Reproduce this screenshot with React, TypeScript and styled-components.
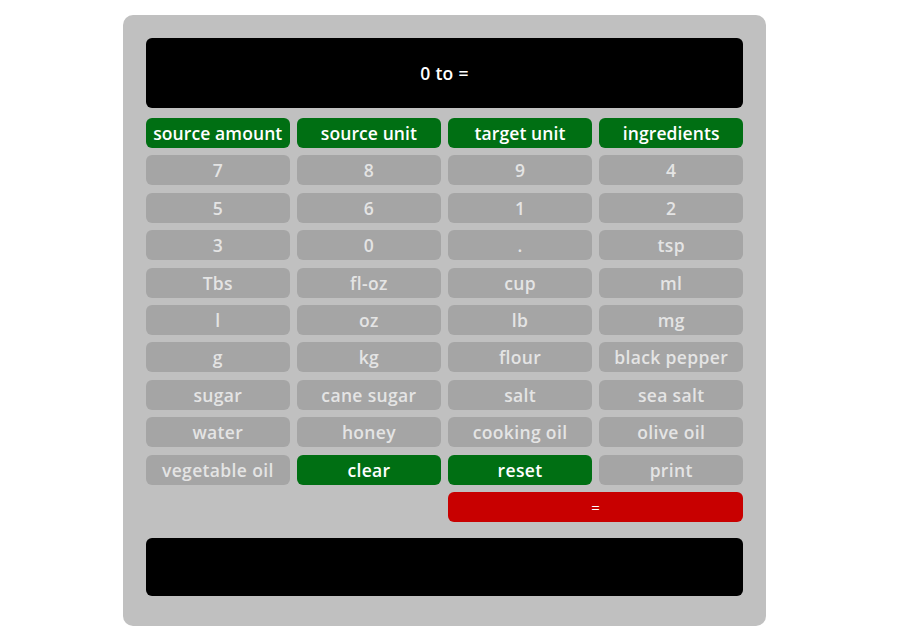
import React, { useState } from 'react';
import styled, { createGlobalStyle } from 'styled-components';

type Kind = 'field' | 'key' | 'action' | 'equals';

interface Key {
  label: string;
  kind: Kind;
  wide?: boolean;
}

const fields = ['source amount', 'source unit', 'target unit', 'ingredients'];
const digits = ['7', '8', '9', '4', '5', '6', '1', '2', '3', '0', '.'];
const units = ['tsp', 'Tbs', 'fl-oz', 'cup', 'ml', 'l', 'oz', 'lb', 'mg', 'g', 'kg'];
const ingredients = [
  'flour', 'black pepper', 'sugar', 'cane sugar', 'salt', 'sea salt',
  'water', 'honey', 'cooking oil', 'olive oil', 'vegetable oil',
];

const keys: Key[] = [
  ...fields.map(label => ({ label, kind: 'field' as Kind })),
  ...[...digits, ...units, ...ingredients].map(label => ({ label, kind: 'key' as Kind })),
  { label: 'clear', kind: 'action' },
  { label: 'reset', kind: 'action' },
  { label: 'print', kind: 'key' },
];

const App: React.FC = () => {
  const [display] = useState('0 to =');

  return (
    <>
      <GlobalStyle />
      <Page>
        <Calculator>
          <Display>{display}</Display>
          <KeyGrid>
            {keys.map((k, idx) => (
              <KeyButton key={idx} kind={k.kind}>{k.label}</KeyButton>
            ))}
            <KeyButton kind="equals" wide>=</KeyButton>
          </KeyGrid>
          <Output />
        </Calculator>
      </Page>
    </>
  );
};

const GlobalStyle = createGlobalStyle`
  body {
    margin: 0;
    background: #ffffff;
    font-family: "Open Sans", "Noto Sans", sans-serif;
  }
`;

const Page = styled.div`
  padding: 15px 0 0 123px;
`;

const Calculator = styled.div`
  width: 643px;
  box-sizing: border-box;
  padding: 23px 23px 30px 23px;
  background: #c0c0c0;
  border-radius: 10px;
`;

const Display = styled.div`
  height: 70px;
  display: flex;
  align-items: center;
  justify-content: center;
  background: #000000;
  border-radius: 6px;
  color: #ffffff;
  font-size: 17.5px;
  font-weight: 600;
  letter-spacing: 0.3px;
  margin-bottom: 10px;
`;

const KeyGrid = styled.div`
  display: grid;
  grid-template-columns: repeat(4, 1fr);
  grid-auto-rows: 30px;
  gap: 7.4px 7.5px;
`;

const KeyButton = styled.button<{ kind: Kind; wide?: boolean }>`
  grid-column: ${props => (props.wide ? '3 / span 2' : 'auto')};
  border: none;
  border-radius: 6px;
  padding: 0;
  font-family: "Open Sans", "Noto Sans", sans-serif;
  font-size: ${props => (props.kind === 'equals' ? '15px' : '17.5px')};
  font-weight: ${props => (props.kind === 'equals' ? 500 : 600)};
  letter-spacing: ${props => (props.kind === 'field' ? '0.1px' : '0.35px')};
  white-space: nowrap;
  cursor: pointer;
  background: ${props => {
    switch (props.kind) {
      case 'field':
      case 'action': return '#006f13';
      case 'equals': return '#c80000';
      default: return '#a5a5a5';
    }
  }};
  color: ${props => (props.kind === 'key' ? '#e4e4e4' : '#ffffff')};
`;

const Output = styled.div`
  height: 58px;
  margin-top: 16px;
  background: #000000;
  border-radius: 6px;
`;

export default App;
